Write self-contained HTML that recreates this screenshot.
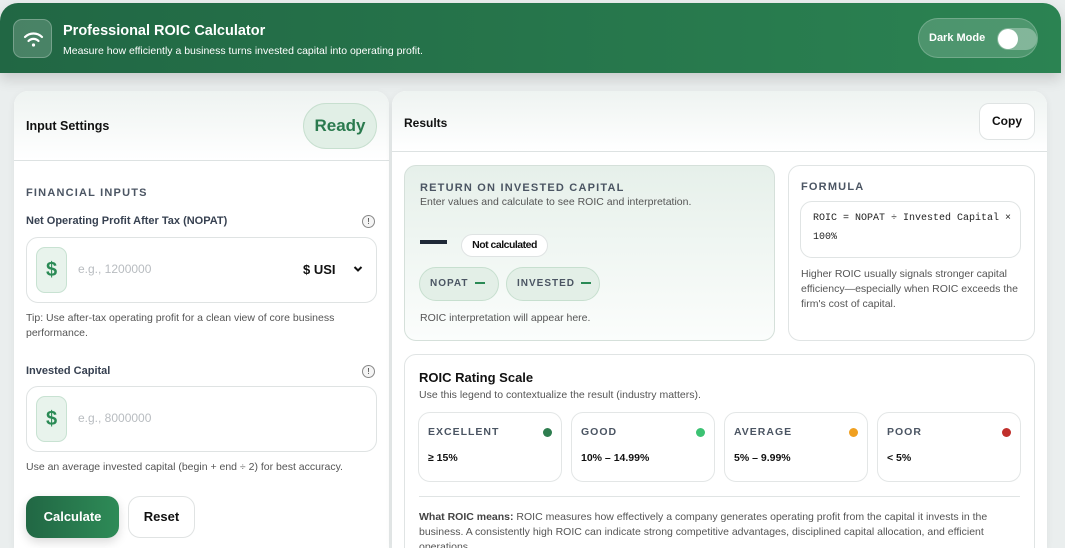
<!DOCTYPE html>
<html style="width:1065px;height:548px;overflow:hidden"><head><meta charset="utf-8"><style>
*{box-sizing:border-box;margin:0;padding:0}
body{width:1065px;height:548px;overflow:hidden;background:#eaeeee;font-family:"Liberation Sans",sans-serif;color:#111;position:relative}
.hdr{position:absolute;left:0;top:3px;width:1061px;height:70px;border-radius:18px 18px 0 0;background:linear-gradient(90deg,#216744,#2b8352);box-shadow:0 6px 14px rgba(0,0,0,.15)}
.logo{position:absolute;left:13px;top:16px;width:39px;height:39px;border-radius:9px;background:rgba(255,255,255,.18);border:1px solid rgba(255,255,255,.25)}
.h1{position:absolute;left:63px;top:20px;color:#fff;font-weight:bold;font-size:14.5px}
.h2{position:absolute;left:63px;top:42px;color:#fff;font-size:10.5px}
.dm{position:absolute;left:918px;top:15px;width:120px;height:40px;border-radius:20px;background:rgba(255,255,255,.17);border:1px solid rgba(255,255,255,.2)}
.dm span{position:absolute;left:10px;top:13px;color:#fff;font-weight:bold;font-size:11px}
.tg{position:absolute;left:78px;top:9px;width:40px;height:22px;border-radius:11px;background:rgba(255,255,255,.3)}
.tg i{position:absolute;left:1px;top:1px;width:20px;height:20px;border-radius:50%;background:#fff}
.panel{position:absolute;background:#fff;border-radius:14px 14px 0 0;box-shadow:0 2px 8px rgba(0,0,0,.06)}
.ph{position:absolute;left:0;right:0;top:0;border-bottom:1px solid #dde2e2;background:linear-gradient(180deg,#eef3f1,#fff);border-radius:14px 14px 0 0}
.b{font-weight:bold}
.lbl{position:absolute;font-size:11px;font-weight:bold;color:#374151}
.inp{position:absolute;left:12px;width:351px;height:66px;border:1px solid #dfe3e3;border-radius:12px}
.dol{position:absolute;left:9px;top:9px;width:31px;height:46px;border-radius:9px;background:#e8f3ec;border:1px solid #c8e2d2;color:#2a8a55;font-weight:bold;font-size:20px;text-align:center;line-height:44px}
.ph2{position:absolute;left:51px;top:24px;color:#b8bcc0;font-size:12px}
.info{position:absolute;width:13px;height:13px;border:1px solid #888;border-radius:50%;font-size:8px;text-align:center;line-height:11px;color:#222;background:#f5f5f5}
.sm{position:absolute;font-size:10.5px;color:#555;line-height:15px}
.card{position:absolute;border:1px solid #e0e4e4;border-radius:12px;background:#fff}
.cap{font-size:11px;font-weight:bold;color:#4b5563;letter-spacing:1.2px;white-space:nowrap}
.pill{position:absolute;height:34px;border-radius:17px;background:#e3efe7;border:1px solid #c7dfcf;font-size:10px;font-weight:bold;color:#4b5563;letter-spacing:1px;line-height:32px;padding-left:10px;white-space:nowrap}
.pill u{display:inline-block;width:10px;height:2px;background:#2a8a55;vertical-align:middle;margin-left:6px;text-decoration:none}
.rc{position:absolute;width:144px;height:70px;border:1px solid #e3e6e6;border-radius:12px}
.rc .t{position:absolute;left:9px;top:13px;font-size:10.5px;font-weight:bold;color:#4b5563;letter-spacing:1px}
.rc .v{position:absolute;left:9px;top:39px;font-size:10.5px;font-weight:bold;color:#111}
.rc i{position:absolute;right:9px;top:15px;width:9px;height:9px;border-radius:50%}
</style></head><body>
<div class="hdr">
 <div class="logo"><svg width="39" height="39" viewBox="0 0 39 39"><g fill="none" stroke="#fff" stroke-width="2.2" stroke-linecap="round"><path d="M11 17a12 12 0 0 1 17 0"/><path d="M14.5 21a7 7 0 0 1 10 0"/></g><circle cx="19.5" cy="25" r="1.6" fill="#fff"/></svg></div>
 <div class="h1">Professional ROIC Calculator</div>
 <div class="h2">Measure how efficiently a business turns invested capital into operating profit.</div>
 <div class="dm"><span>Dark Mode</span><div class="tg"><i></i></div></div>
</div>

<div class="panel" style="left:14px;top:91px;width:375px;height:457px">
 <div class="ph" style="height:70px"></div>
 <div class="b" style="position:absolute;left:12px;top:28px;font-size:12.5px">Input Settings</div>
 <div style="position:absolute;left:289px;top:12px;width:74px;height:46px;border-radius:23px;background:#e1efe6;border:1px solid #c7dfcf;color:#2a7a4e;font-weight:bold;font-size:17px;text-align:center;line-height:44px">Ready</div>
 <div class="cap" style="position:absolute;left:12px;top:96px">FINANCIAL INPUTS</div>
 <div class="lbl" style="left:12px;top:124px">Net Operating Profit After Tax (NOPAT)</div>
 <div class="info" style="left:348px;top:124px">!</div>
 <div class="inp" style="top:146px"><div class="dol">$</div><div class="ph2">e.g., 1200000</div>
  <div class="b" style="position:absolute;left:276px;top:24px;font-size:13px">$ USI</div>
  <svg style="position:absolute;left:326px;top:27px" width="10" height="8" viewBox="0 0 10 8"><path d="M1.5 2l3.5 3.5L8.5 2" fill="none" stroke="#111" stroke-width="2"/></svg></div>
 <div class="sm" style="left:12px;top:220px;width:340px">Tip: Use after-tax operating profit for a clean view of core business performance.</div>
 <div class="lbl" style="left:12px;top:274px">Invested Capital</div>
 <div class="info" style="left:348px;top:274px">!</div>
 <div class="inp" style="top:295px"><div class="dol">$</div><div class="ph2">e.g., 8000000</div></div>
 <div class="sm" style="left:12px;top:369px">Use an average invested capital (begin + end ÷ 2) for best accuracy.</div>
 <div style="position:absolute;left:12px;top:405px;width:93px;height:42px;border-radius:12px;background:linear-gradient(90deg,#216744,#2e8b57);color:#fff;font-weight:bold;font-size:13px;text-align:center;line-height:42px;box-shadow:0 4px 10px rgba(0,0,0,.15)">Calculate</div>
 <div style="position:absolute;left:114px;top:405px;width:67px;height:42px;border-radius:12px;border:1px solid #e0e3e3;font-weight:bold;font-size:13px;text-align:center;line-height:40px">Reset</div>
</div>

<div class="panel" style="left:392px;top:91px;width:655px;height:457px;overflow:hidden">
 <div class="ph" style="height:61px"></div>
 <div class="b" style="position:absolute;left:12px;top:25px;font-size:12px">Results</div>
 <div style="position:absolute;left:587px;top:12px;width:56px;height:37px;border:1px solid #dfe3e3;border-radius:10px;background:#fff;font-weight:bold;font-size:12px;text-align:center;line-height:35px">Copy</div>
 <div class="card" style="left:12px;top:74px;width:371px;height:176px;background:linear-gradient(180deg,#e6f0ea,#fbfdfc);border-color:#d5e0da">
  <div class="cap" style="position:absolute;left:15px;top:16px">RETURN ON INVESTED CAPITAL</div>
  <div class="sm" style="left:15px;top:29px;color:#555">Enter values and calculate to see ROIC and interpretation.</div>
  <div style="position:absolute;left:15px;top:74px;width:27px;height:4px;background:#1f2937"></div>
  <div style="position:absolute;left:56px;top:68px;width:87px;height:23px;border-radius:12px;background:#fff;border:1px solid #dfe3e3;font-size:10.5px;font-weight:bold;text-align:center;line-height:21px;letter-spacing:-.5px">Not calculated</div>
  <div class="pill" style="left:14px;top:101px;width:80px">NOPAT<u></u></div>
  <div class="pill" style="left:101px;top:101px;width:94px">INVESTED<u></u></div>
  <div class="sm" style="left:15px;top:145px">ROIC interpretation will appear here.</div>
 </div>
 <div class="card" style="left:396px;top:74px;width:247px;height:176px">
  <div class="cap" style="position:absolute;left:12px;top:15px">FORMULA</div>
  <div style="position:absolute;left:11px;top:35px;width:221px;height:57px;border:1px solid #e0e4e4;border-radius:12px;font-family:'Liberation Mono',monospace;font-size:10px;line-height:19px;padding:7px 0 0 12px;color:#222">ROIC = NOPAT ÷ Invested Capital ×<br>100%</div>
  <div class="sm" style="left:12px;top:101px;width:230px">Higher ROIC usually signals stronger capital efficiency—especially when ROIC exceeds the firm's cost of capital.</div>
 </div>
 <div class="card" style="left:12px;top:263px;width:631px;height:220px">
  <div class="b" style="position:absolute;left:14px;top:15px;font-size:13px">ROIC Rating Scale</div>
  <div class="sm" style="left:14px;top:33px">Use this legend to contextualize the result (industry matters).</div>
  <div style="position:absolute;left:14px;right:14px;top:141px;border-top:1px solid #e0e4e4"></div>
  <div class="sm" style="left:14px;top:155px;width:600px"><b style="color:#444">What ROIC means:</b> ROIC measures how effectively a company generates operating profit from the capital it invests in the business. A consistently high ROIC can indicate strong competitive advantages, disciplined capital allocation, and efficient operations.</div>
 </div>
 <div class="rc" style="left:26px;top:321px"><span class="t">EXCELLENT</span><i style="background:#2e7d4f"></i><span class="v">≥ 15%</span></div>
 <div class="rc" style="left:179px;top:321px"><span class="t">GOOD</span><i style="background:#3cc273"></i><span class="v">10% – 14.99%</span></div>
 <div class="rc" style="left:332px;top:321px"><span class="t">AVERAGE</span><i style="background:#f0a020"></i><span class="v">5% – 9.99%</span></div>
 <div class="rc" style="left:485px;top:321px"><span class="t">POOR</span><i style="background:#c0302c"></i><span class="v">&lt; 5%</span></div>
</div>
</body></html>
